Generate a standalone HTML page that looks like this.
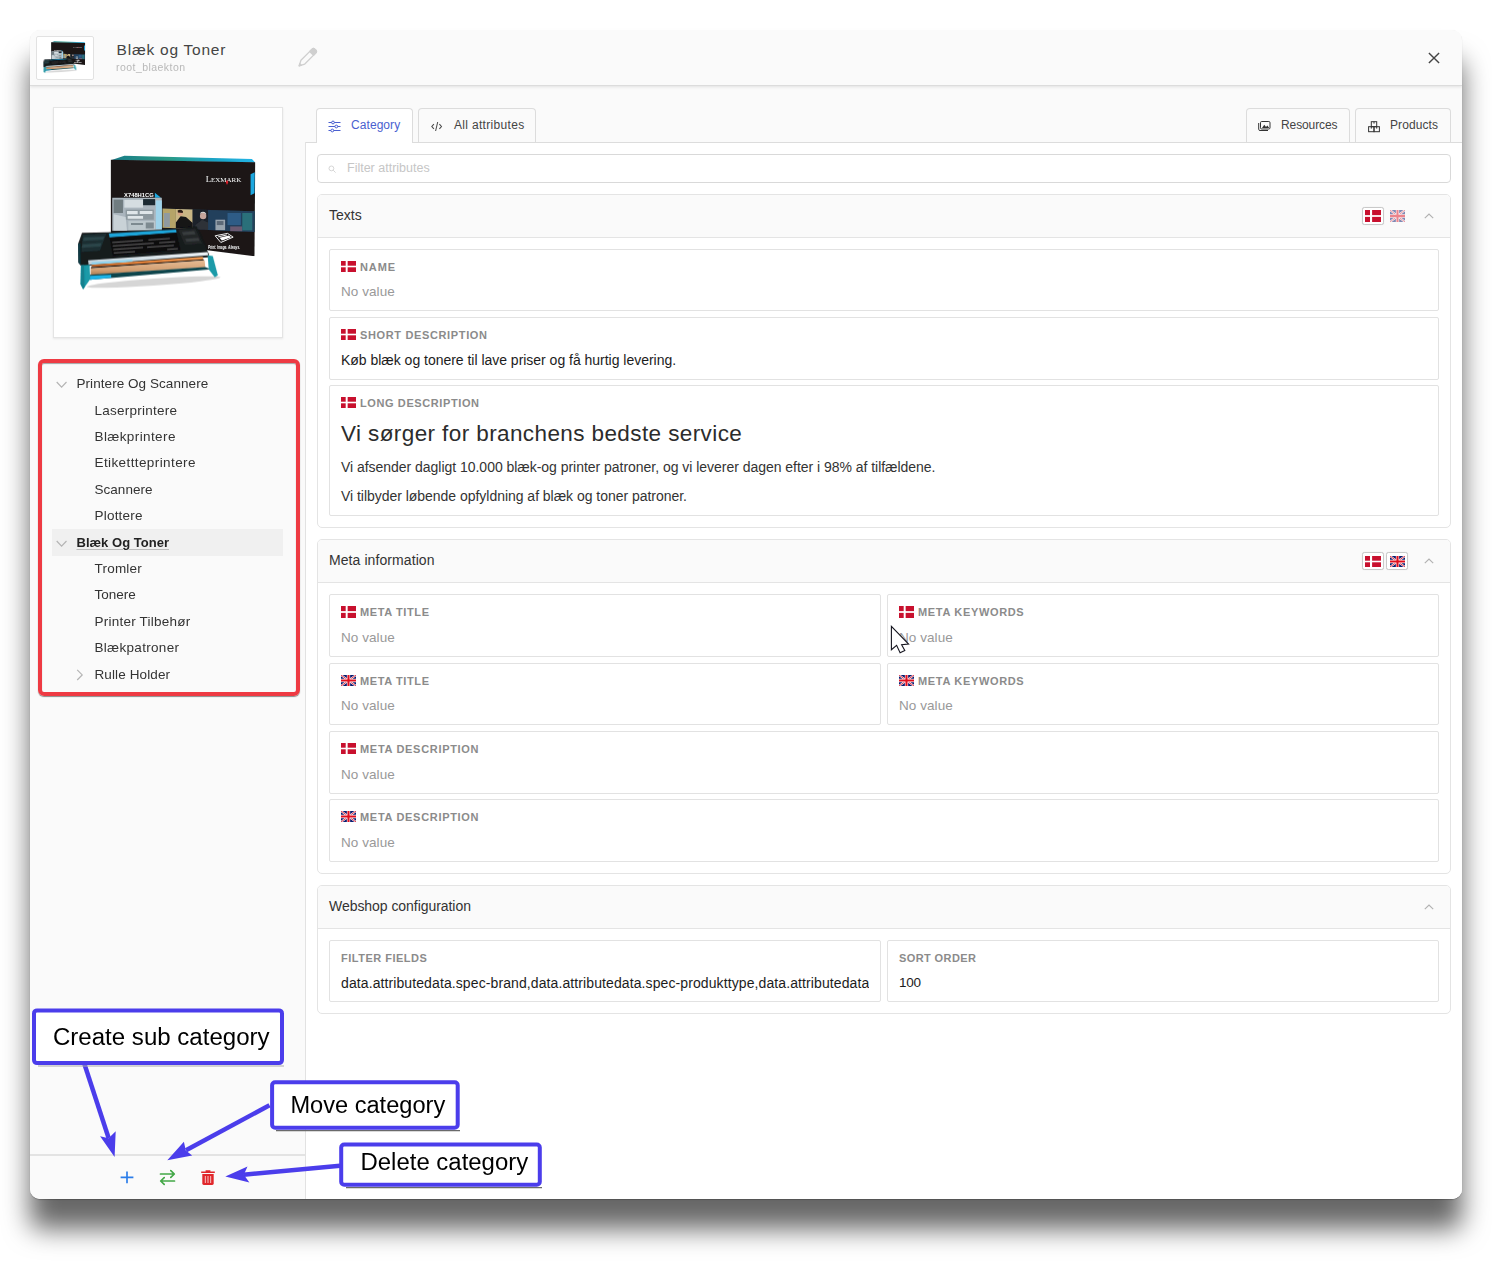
<!DOCTYPE html>
<html lang="en">
<head>
<meta charset="utf-8">
<title>Blæk og Toner</title>
<style>
*{box-sizing:border-box;margin:0;padding:0}
html,body{width:1492px;height:1261px;background:#fff;overflow:hidden}
body{font-family:"Liberation Sans",sans-serif;color:#333;position:relative;font-size:13px}
.abs{position:absolute}
#shadow{position:absolute;left:30px;top:30px;width:1432px;height:1169px;border-radius:10px;background:#fafafa;
  box-shadow:0 30px 27px rgba(0,0,0,.6),0 1px 1px rgba(0,0,0,.22)}
#win{position:absolute;left:0;top:0;width:1492px;height:1261px;clip-path:inset(30px 30px 62px 30px round 10px);background:#fafafa}
#hdr{position:absolute;left:30px;top:30px;width:1432px;height:56px;background:#fafafa;border-bottom:1px solid #dcdcdc;box-shadow:0 1px 3px rgba(0,0,0,.10)}
#thumb{position:absolute;left:36px;top:36px;width:58px;height:44px;background:#fff;border:1px solid #e2e2e2;border-radius:2px;overflow:hidden}
#title{position:absolute;left:116.6px;top:40px;font-size:15.5px;line-height:20px;color:#444;letter-spacing:.76px;white-space:nowrap}
#subtitle{position:absolute;left:116px;top:61px;font-size:10.5px;line-height:12px;color:#b9b9b9;letter-spacing:.45px;white-space:nowrap}
#sideborder{position:absolute;left:305px;top:142px;width:1px;height:1057px;background:#e2e2e2}
#imgcard{position:absolute;left:52.5px;top:107px;width:230.5px;height:231px;background:#fff;border:1px solid #e4e4e4;box-shadow:0 1px 2px rgba(0,0,0,.08)}
#redbox{left:38px;top:359px;width:262px;height:337px;border:4px solid #ee3a43;border-radius:6px;box-shadow:0 1px 1px rgba(0,0,0,.45), inset 0 1px 1px rgba(0,0,0,.35)}
.tree{position:absolute;left:52px;width:231px;height:27px;line-height:28px;font-size:13.5px;color:#333;white-space:nowrap}
.tree span{position:absolute;top:0}
.tree.sel{background:#f0f0f0}
.tree.sel span{font-weight:bold;font-size:13px;color:#222;text-decoration:underline;text-decoration-color:#bbb;text-underline-offset:2px}
#sidefoot{position:absolute;left:30px;top:1154px;width:275px;height:2px;background:#e3e3e3}
#mainbg{position:absolute;left:306px;top:143px;width:1156px;height:1056px;background:#fff}
#tabline{position:absolute;left:305px;top:142px;width:1157px;height:1px;background:#dcdcdc}
.tab{position:absolute;top:108px;height:34px;border:1px solid #dcdcdc;border-bottom:none;border-radius:4px 4px 0 0;background:#fafafa;font-size:12px;line-height:33px;color:#444;white-space:nowrap}
.tab.act{background:#fff;color:#4a5fd0;height:35px}
.tab span{position:absolute;top:0}
.tab svg{position:absolute}
#filter{position:absolute;left:317px;top:154px;width:1134px;height:29px;border:1px solid #d9d9d9;border-radius:4px;background:#fff}
#filter span{position:absolute;left:29px;top:0;line-height:27px;font-size:12.5px;color:#c6c6c6}
.panel{position:absolute;left:317px;width:1134px;border:1px solid #e4e4e4;border-radius:5px;background:#fff}
.phead{position:absolute;left:0;top:0;width:100%;height:43px;background:#fafafa;border-bottom:1px solid #e4e4e4;border-radius:4px 4px 0 0}
.phead b{position:absolute;left:11px;top:0;line-height:41px;font-size:14px;font-weight:normal;color:#333;white-space:nowrap}
.fbtn{width:22px;height:18px;border:1px solid #c9c9c9;border-radius:2.5px;background:#fff;box-shadow:0 0 1px rgba(0,0,0,.15)}
.fld{position:absolute;border:1px solid #e2e2e2;border-radius:2px;background:#fff}
.lbl{position:absolute;left:11px;top:11px;font-size:11px;line-height:13px;font-weight:bold;color:#8b8b8b;letter-spacing:.6px;white-space:nowrap}
.lbl.fl{left:30px}
.flag{position:absolute;left:11px;top:11px;width:15px;height:11px}
.val{position:absolute;left:11px;top:34px;font-size:14px;line-height:16px;color:#1c1c1c;white-space:nowrap;letter-spacing:-.02px}
.val.nv{color:#999;font-size:13.5px;letter-spacing:.07px}
.chev{position:absolute}
.para{font-size:14px;line-height:16px;color:#333;white-space:nowrap;letter-spacing:-.03px}
#h1{left:11px;top:33.5px;font-size:22.5px;line-height:28px;color:#2c2c2c;white-space:nowrap;letter-spacing:.4px}
</style>
</head>
<body>
<svg width="0" height="0" style="position:absolute">
<defs>
<symbol id="dk" viewBox="0 0 16 11" preserveAspectRatio="none"><rect width="16" height="11" fill="#c8102e"/><rect x="5" width="2.1" height="11" fill="#fff"/><rect y="4.7" width="16" height="1.6" fill="#fff"/></symbol>
<symbol id="uk" viewBox="0 0 15 11" preserveAspectRatio="none"><rect width="15" height="11" fill="#0a1a6e"/><path d="M0 0L15 11M15 0L0 11" stroke="#fff" stroke-width="1.9"/><path d="M0 0L15 11M15 0L0 11" stroke="#e0192b" stroke-width="0.9"/><path d="M7.5 0V11M0 5.5H15" stroke="#fff" stroke-width="3.3"/><path d="M7.5 0V11M0 5.5H15" stroke="#e0101f" stroke-width="2.1"/></symbol>
<symbol id="chevup" viewBox="0 0 10 6"><path d="M0.8 5.2L5 1L9.2 5.2" fill="none" stroke="#b2b2b2" stroke-width="1.15"/></symbol>
<linearGradient id="gtop" x1="0" x2="1" y1="0" y2="0"><stop offset="0" stop-color="#1a7d88"/><stop offset=".4" stop-color="#2a9a86"/><stop offset=".7" stop-color="#1ba3c4"/><stop offset="1" stop-color="#25b5e8"/></linearGradient>
<linearGradient id="gsil" x1="0" x2="0" y1="0" y2="1"><stop offset="0" stop-color="#f4f8fa"/><stop offset="1" stop-color="#b9cbd6"/></linearGradient>
<linearGradient id="gcop" x1="0" x2="0" y1="0" y2="1"><stop offset="0" stop-color="#f6a25a"/><stop offset=".6" stop-color="#e67f35"/><stop offset="1" stop-color="#a4501c"/></linearGradient>
<linearGradient id="gtan" x1="0" x2="0" y1="0" y2="1"><stop offset="0" stop-color="#e8bc94"/><stop offset=".7" stop-color="#d19e72"/><stop offset="1" stop-color="#a87a52"/></linearGradient>
<filter id="blr" x="-5%" y="-5%" width="110%" height="110%"><feGaussianBlur stdDeviation="4"/></filter>
<symbol id="prod" viewBox="0 0 1492 1119">
<g filter="url(#blr)">
<path d="M320 76L420 42L1372 68L1397 94Z" fill="url(#gtop)"/>
<path d="M320 72L1397 92L1391 792L320 656Z" fill="#1a1617"/>
<path d="M1362 180L1393 166L1391 322L1362 337Z" fill="#1ea7df"/>
<path d="M1375 460L1392 455L1390 610L1375 606Z" fill="#2e7f78"/>
<!-- lexmark -->
<g font-family="Liberation Serif, serif" fill="#fff"><text x="1028" y="240" font-size="66">L</text><text x="1066" y="240" font-size="50" textLength="226" lengthAdjust="spacingAndGlyphs">EXMARK</text></g>
<path d="M1186 222L1196 240L1186 262L1177 240Z" fill="#e0202a"/>
<!-- model -->
<text x="418" y="352" font-family="Liberation Sans, sans-serif" font-weight="bold" font-size="42" fill="#fff" textLength="222" lengthAdjust="spacingAndGlyphs">X748H1CG</text>
<path d="M648 318L694 356L648 356Z" fill="#1fa9e0"/>
<!-- office photo -->
<path d="M330 356L700 356L700 602L330 602Z" fill="#aab5bd"/>
<path d="M655 376H700V592H655Z" fill="#9fd3ea"/>
<path d="M340 370H410V470H340Z" fill="#6f7b80"/><path d="M420 372H560V430H420Z" fill="#d5dde1"/><path d="M560 366H650V412H560Z" fill="#1f2c33"/>
<path d="M430 445H640V520H430Z" fill="#8d999f"/><path d="M440 455H520V480H440ZM535 455H630V478H535ZM445 492H560V512H445Z" fill="#dfe6e9"/>
<path d="M340 480L430 500L440 600H340Z" fill="#c9d2d7"/><path d="M450 530H650V596H450Z" fill="#bcc7cc"/><path d="M470 545H560V560H470ZM580 540H640V585H580Z" fill="#7d8a90"/>
<!-- photo strip -->
<path d="M705 437L1392 457L1390 612L705 580Z" fill="#20303f"/>
<path d="M705 437L805 440V584L705 580Z" fill="#b5a468"/><path d="M715 470H760V575H715Z" fill="#8f9aa0"/>
<path d="M805 440L930 444V590L805 584Z" fill="#c9b684"/>
<circle cx="838" cy="470" r="20" fill="#d4a283"/><path d="M818 452Q838 436 858 456L856 470L820 466Z" fill="#2a1d16"/>
<path d="M805 540L840 495L880 500L930 545V590L805 584Z" fill="#121214"/>
<path d="M930 444L1045 447V596L930 590Z" fill="#1c2029"/><circle cx="1008" cy="492" r="24" fill="#c6a59b"/><path d="M985 478Q1008 458 1032 480L1028 470Q1008 452 988 468Z" fill="#e8e4e0"/><path d="M950 560L1000 520L1045 540V596L950 592Z" fill="#2d3138"/>
<path d="M1045 447L1392 457L1390 612L1045 596Z" fill="#24405c"/>
<path d="M1100 520H1172V598H1100Z" fill="#98a4ae"/><path d="M1110 530H1160V560H1110Z" fill="#5d6b78"/><path d="M1190 470H1290V560H1190Z" fill="#2e5b86"/><path d="M1210 570H1300V606H1210Z" fill="#6a5a72"/><path d="M1300 470H1375V600H1300Z" fill="#2a6f7a"/>
<!-- icon + tagline -->
<g fill="none" stroke="#fff" stroke-width="7"><path d="M1098 640L1190 622L1232 650L1140 690Z"/><path d="M1120 648L1185 634M1150 668L1210 648"/></g>
<path d="M1130 655L1200 638L1215 650L1148 676Z" fill="#fff"/>
<text x="1044" y="736" font-family="Liberation Sans, sans-serif" font-weight="bold" font-style="italic" font-size="34" fill="#fff" textLength="240" lengthAdjust="spacingAndGlyphs">Print. Image. Always.</text>
<!-- cartridge -->
<ellipse cx="640" cy="985" rx="500" ry="26" fill="#000" opacity=".16" transform="rotate(-4 640 985)"/>
<path d="M75 702L105 618L300 614L806 590L960 571L1012 690L1052 778L1046 800L176 862L100 868L78 840Z" fill="#161b1c"/>
<path d="M110 630L288 623L238 752L100 762Z" fill="#1c2f33"/><path d="M118 652L272 645L262 670L112 678ZM108 704L250 695L242 720L102 730Z" fill="#2c4448"/>
<path d="M75 702L92 694L94 860L78 840Z" fill="#0b3a44"/>
<path d="M822 596L950 586L1002 700L872 708Z" fill="#232628"/><path d="M850 612L942 605L952 628L860 636ZM874 662L972 654L982 677L884 685Z" fill="#383c3e"/>
<path d="M304 624L806 593L810 616L311 653Z" fill="#1fa5da"/>
<path d="M311 653L810 616L840 747L334 792Z" fill="#0f0e10"/>
<g stroke="#7a7a7a" stroke-width="6"><path d="M330 690L560 674M600 671L760 660"/><path d="M334 716L640 695M680 692L800 684"/><path d="M338 742L560 727M590 725L790 712"/><path d="M342 768L500 758M740 742L820 736"/></g>
<path d="M150 822L1042 762L1046 786L154 856Z" fill="url(#gsil)"/>
<path d="M176 838L480 818L482 836L176 856Z" fill="#8fd3ee"/>
<path d="M176 856L1005 797L1009 819L176 874Z" fill="url(#gcop)"/>
<path d="M171 873L1012 816L1014 824L171 884Z" fill="#1b1410"/>
<path d="M169 882L1020 823L1024 875L169 932Z" fill="url(#gtan)"/>
<path d="M161 931L1024 874L1066 890L165 968Z" fill="#0e444c"/>
<path d="M165 938L322 931L322 953L165 968Z" fill="#1fb4e8"/>
<path d="M97 860L161 856L165 965L113 1040L94 1002Z" fill="#1a9aa8"/><path d="M97 860L120 858L124 1024L113 1040L94 1002Z" fill="#12808e"/>
<path d="M1042 785L1080 792L1118 934L1095 950L1050 890Z" fill="#1a9aa8"/>
</g>
</symbol>

</defs></svg>

<div id="shadow"></div>
<div id="win">
  <div id="mainbg"></div>
  <div id="tabline"></div>
  <div id="sideborder"></div>
  <div id="hdr"></div>
  <div id="thumb"><svg class="abs" style="left:4px;top:3px" width="47.2" height="35.4" viewBox="0 0 1492 1119"><use href="#prod"/></svg></div>
  <div id="title">Blæk og Toner</div>
  <div id="subtitle">root_blaekton</div>
  <div id="imgcard"><svg class="abs" style="left:14.5px;top:42px" width="200" height="150" viewBox="0 0 1492 1119"><use href="#prod"/></svg></div>
  <div id="sidefoot"></div>
  <svg class="abs" style="left:290px;top:40px" width="36" height="36" viewBox="290 40 36 36"><g transform="translate(298.9 66.1) rotate(-45)" fill="none" stroke="#cfcfcf" stroke-width="1.3" stroke-linejoin="round"><path d="M0.3 0L5.6 -2.7L21 -2.7Q23.2 -2.7 23.2 -0.8L23.2 0.8Q23.2 2.7 21 2.7L5.6 2.7Z"/><path d="M18 -2.7L21 -2.7Q23.2 -2.7 23.2 -0.8L23.2 0.8Q23.2 2.7 21 2.7L18 2.7Z" fill="#cfcfcf"/><path d="M0.3 0L2.4 -1.1V1.1Z" fill="#cfcfcf"/></g></svg>
  <svg class="abs" style="left:1427px;top:51px" width="14" height="14" viewBox="0 0 14 14"><path d="M1.9 1.9L12.1 12.1M12.1 1.9L1.9 12.1" stroke="#444" stroke-width="1.4" fill="none"/></svg>
  <svg class="abs" style="left:120px;top:1171px" width="14" height="13" viewBox="0 0 14 13"><path d="M7 0.5V12.3M0.6 6.4H13.4" stroke="#2b7de9" stroke-width="1.7" fill="none"/></svg>
  <svg class="abs" style="left:159px;top:1169px" width="17" height="17" viewBox="0 0 17 17" fill="none" stroke="#43a847" stroke-width="1.7" stroke-linecap="round" stroke-linejoin="round"><path d="M1.5 5H15.2M11.8 1.7L15.3 5L11.8 8.3"/><path d="M15.5 12H1.8M5.2 8.7L1.7 12L5.2 15.3"/></svg>
  <svg class="abs" style="left:200px;top:1169px" width="16" height="17" viewBox="0 0 16 17"><path d="M1.2 2.6H14.8V4H1.2Z M5.6 1.2H10.4V2.8H5.6Z" fill="#e0272b"/><path d="M2.3 5H13.7V14.6Q13.7 16 12.3 16H3.7Q2.3 16 2.3 14.6Z" fill="#e0272b"/><path d="M5.4 7V14M8 7V14M10.6 7V14" stroke="#f3a9aa" stroke-width="1.2"/></svg>

  <div class="abs" id="redbox"></div>
  <div class="tree" style="top:370px"><svg class="chev" style="left:4px;top:11px" width="12" height="8" viewBox="0 0 12 8"><path d="M0.7 1.0 L5.6 6.2 L10.5 1.0" fill="none" stroke="#b4b4b4" stroke-width="1.2"/></svg><span style="left:24.5px;letter-spacing:0.06px">Printere Og Scannere</span></div>
  <div class="tree" style="top:397px"><span style="left:42.5px;letter-spacing:0.25px">Laserprintere</span></div>
  <div class="tree" style="top:423px"><span style="left:42.5px;letter-spacing:0.4px">Blækprintere</span></div>
  <div class="tree" style="top:449px"><span style="left:42.5px;letter-spacing:0.4px">Etikettteprintere</span></div>
  <div class="tree" style="top:476px"><span style="left:42.5px;letter-spacing:0.03px">Scannere</span></div>
  <div class="tree" style="top:502px"><span style="left:42.5px;letter-spacing:0.21px">Plottere</span></div>
  <div class="tree sel" style="top:529px"><svg class="chev" style="left:4px;top:11px" width="12" height="8" viewBox="0 0 12 8"><path d="M0.7 1.0 L5.6 6.2 L10.5 1.0" fill="none" stroke="#b4b4b4" stroke-width="1.2"/></svg><span style="left:24.5px;letter-spacing:0.02px">Blæk Og Toner</span></div>
  <div class="tree" style="top:555px"><span style="left:42.5px;letter-spacing:0.21px">Tromler</span></div>
  <div class="tree" style="top:581px"><span style="left:42.5px;letter-spacing:0px">Tonere</span></div>
  <div class="tree" style="top:608px"><span style="left:42.5px;letter-spacing:0.23px">Printer Tilbehør</span></div>
  <div class="tree" style="top:634px"><span style="left:42.5px;letter-spacing:0.31px">Blækpatroner</span></div>
  <div class="tree" style="top:661px"><svg class="chev" style="left:24px;top:8px" width="8" height="12" viewBox="0 0 8 12"><path d="M1.2 0.8 L6.2 5.9 L1.2 11" fill="none" stroke="#b4b4b4" stroke-width="1.2"/></svg><span style="left:42.5px;letter-spacing:0.11px">Rulle Holder</span></div>
  <div class="tab act" style="left:316px;width:97px">
    <svg style="left:11px;top:11px" width="13" height="13" viewBox="0 0 13 13" fill="none" stroke="#4a5fd0" stroke-width="1"><path d="M0.5 2.5H12.5M0.5 6.5H12.5M0.5 10.5H12.5"/><circle cx="5" cy="2.5" r="1.4" fill="#fff"/><circle cx="8.3" cy="6.5" r="1.4" fill="#fff"/><circle cx="4.3" cy="10.5" r="1.4" fill="#fff"/></svg>
    <span style="left:34px;letter-spacing:.07px">Category</span></div>
  <div class="tab" style="left:418px;width:118px">
    <svg style="left:12px;top:12px" width="12" height="11" viewBox="0 0 12 11" fill="none" stroke="#484848" stroke-width="1.05"><path d="M2.9 3.1L0.8 5.5L2.9 7.9M8.4 3.1L10.5 5.5L8.4 7.9M6.7 1L4.6 10"/></svg>
    <span style="left:35px;letter-spacing:.32px">All attributes</span></div>
  <div class="tab" style="left:1246px;width:104px">
    <svg style="left:11px;top:10px" width="13" height="12" viewBox="0 0 13 12" fill="none" stroke="#333" stroke-width="1"><rect x="2.5" y="2.5" width="9.5" height="7.5" rx="1.2"/><path d="M0.7 4V10.3Q0.7 11.5 2 11.5H10" /><path d="M4 9L6.3 5.8L8 8L9.3 6.6L11.3 9Z" fill="#333" stroke="none"/></svg>
    <span style="left:34px;letter-spacing:-.1px">Resources</span></div>
  <div class="tab" style="left:1355px;width:96px">
    <svg style="left:11.5px;top:12px" width="12" height="12" viewBox="0 0 12 12" fill="none" stroke="#333" stroke-width="1"><rect x="3.3" y="0.7" width="5.4" height="5"/><rect x="0.6" y="5.7" width="5.4" height="5"/><rect x="6" y="5.7" width="5.4" height="5"/><path d="M6 0.7V2.6M3.3 5.7V7.6M8.7 5.7V7.6"/></svg>
    <span style="left:34px;letter-spacing:.08px">Products</span></div>
  <div id="filter"><svg class="abs" style="left:9.5px;top:9.5px" width="9" height="9" viewBox="0 0 9 9" fill="none" stroke="#d6d6d6" stroke-width="1"><circle cx="3.4" cy="3.4" r="2.4"/><path d="M5.2 5.2L7.6 7.6"/></svg><span>Filter attributes</span></div>

  <div class="panel" style="top:194px;height:334px"><div class="phead"><b style="letter-spacing:0">Texts</b><div class="abs fbtn" style="left:1044px;top:12px"><svg class="abs" style="left:2px;top:2px" width="16" height="12"><use href="#dk"/></svg></div><svg class="abs" style="left:1072px;top:15px;opacity:.5" width="15" height="12"><use href="#uk"/></svg><svg class="abs" style="left:1106px;top:18px" width="10" height="6"><use href="#chevup"/></svg></div><div class="fld" style="left:11px;top:54px;width:1110px;height:62px"><svg class="flag" style="height:11px" width="15" height="11"><use href="#dk"/></svg><div class="lbl fl" style="letter-spacing:0.87px">NAME</div><div class="val nv" style="">No value</div></div><div class="fld" style="left:11px;top:122px;width:1110px;height:63px"><svg class="flag" style="height:11px" width="15" height="11"><use href="#dk"/></svg><div class="lbl fl" style="letter-spacing:0.64px">SHORT DESCRIPTION</div><div class="val" style="">Køb blæk og tonere til lave priser og få hurtig levering.</div></div><div class="fld" style="left:11px;top:190px;width:1110px;height:131px"><svg class="flag" style="height:11px" width="15" height="11"><use href="#dk"/></svg><div class="lbl fl" style="letter-spacing:0.6px">LONG DESCRIPTION</div><div class="abs" id="h1">Vi sørger for branchens bedste service</div><div class="abs para" style="left:11px;top:73px" id="p1">Vi afsender dagligt 10.000 blæk-og printer patroner, og vi leverer dagen efter i 98% af tilfældene.</div><div class="abs para" style="left:11px;top:102px" id="p2">Vi tilbyder løbende opfyldning af blæk og toner patroner.</div></div></div>
  <div class="panel" style="top:539px;height:335px"><div class="phead"><b style="letter-spacing:.08px">Meta information</b><div class="abs fbtn" style="left:1044px;top:12px"><svg class="abs" style="left:2px;top:3px" width="16" height="11"><use href="#dk"/></svg></div><div class="abs fbtn" style="left:1068px;top:12px"><svg class="abs" style="left:3px;top:3px" width="15" height="11"><use href="#uk"/></svg></div><svg class="abs" style="left:1106px;top:18px" width="10" height="6"><use href="#chevup"/></svg></div><div class="fld" style="left:11px;top:54px;width:552px;height:63px"><svg class="flag" style="height:12px" width="15" height="12"><use href="#dk"/></svg><div class="lbl fl" style="letter-spacing:0.61px">META TITLE</div><div class="val nv" style="top:35px">No value</div></div><div class="fld" style="left:569px;top:54px;width:552px;height:63px"><svg class="flag" style="height:12px" width="15" height="12"><use href="#dk"/></svg><div class="lbl fl" style="letter-spacing:0.66px">META KEYWORDS</div><div class="val nv" style="top:35px">No value</div></div><div class="fld" style="left:11px;top:123px;width:552px;height:62px"><svg class="flag" style="height:11px" width="15" height="11"><use href="#uk"/></svg><div class="lbl fl" style="letter-spacing:0.61px">META TITLE</div><div class="val nv" style="">No value</div></div><div class="fld" style="left:569px;top:123px;width:552px;height:62px"><svg class="flag" style="height:11px" width="15" height="11"><use href="#uk"/></svg><div class="lbl fl" style="letter-spacing:0.66px">META KEYWORDS</div><div class="val nv" style="">No value</div></div><div class="fld" style="left:11px;top:191px;width:1110px;height:63px"><svg class="flag" style="height:11px" width="15" height="11"><use href="#dk"/></svg><div class="lbl fl" style="letter-spacing:0.69px">META DESCRIPTION</div><div class="val nv" style="top:35px">No value</div></div><div class="fld" style="left:11px;top:259px;width:1110px;height:63px"><svg class="flag" style="height:11px" width="15" height="11"><use href="#uk"/></svg><div class="lbl fl" style="letter-spacing:0.69px">META DESCRIPTION</div><div class="val nv" style="top:35px">No value</div></div></div>
  <div class="panel" style="top:885px;height:129px"><div class="phead"><b style="letter-spacing:-.05px">Webshop configuration</b><svg class="abs" style="left:1106px;top:18px" width="10" height="6"><use href="#chevup"/></svg></div><div class="fld" style="left:11px;top:54px;width:552px;height:62px"><div class="lbl" style="letter-spacing:0.5px">FILTER FIELDS</div><div class="val" style=""><span id="ff" style="display:block;width:528px;overflow:hidden;letter-spacing:.1px">data.attributedata.spec-brand,data.attributedata.spec-produkttype,data.attributedata.spec-farve</span></div></div><div class="fld" style="left:569px;top:54px;width:552px;height:62px"><div class="lbl" style="letter-spacing:0.4px">SORT ORDER</div><div class="val" style="font-size:13.5px;letter-spacing:-.3px;">100</div></div></div>
</div>
<svg id="anno" class="abs" style="left:0;top:0" width="1492" height="1261" viewBox="0 0 1492 1261">
<g fill="none" stroke="#4b3deb" stroke-width="4.5" stroke-linecap="butt">
<path d="M84.4 1064L108.6 1138"/>
<path d="M269.5 1105.3L186 1150.2"/>
<path d="M340 1165.7L243.5 1174.7"/>
</g>
<g fill="#4b3deb">
<path d="M114.6 1157L100.1 1136.3L108.6 1138.2L115.7 1131.3Z"/>
<path d="M167.3 1160.2L183.9 1141.8L185.8 1150.6L192.2 1155.6Z"/>
<path d="M225.3 1176.4L247.5 1166.6L243.8 1174.8L249.4 1182.6Z"/>
</g>
<g stroke="#6a6a6a" stroke-width="1.2">
<path d="M38 1066H284" stroke="#aaa"/><path d="M276 1130.6H460"/><path d="M346 1187.6H542"/>
</g>
<g fill="#fff" stroke="#4b3deb" stroke-width="4">
<rect x="34" y="1010.4" width="248" height="52.7" rx="3"/>
<rect x="272.1" y="1082.3" width="185.6" height="45.4" rx="3"/>
<rect x="341.2" y="1144.5" width="198.6" height="40.2" rx="3"/>
</g>
<g font-family="Liberation Sans, sans-serif" fill="#000">
<text x="53" y="1045.2" font-size="24.05">Create sub category</text>
<text x="290.4" y="1112.7" font-size="23.62">Move category</text>
<text x="360.5" y="1170" font-size="23.95">Delete category</text>
</g>
<path d="M891.4 626.3L891.4 649.7L896.6 645.3L900.1 652.7L904.8 650.5L901.6 644.7L908.6 644.1Z" fill="#fff" stroke="#15151f" stroke-width="1.1" stroke-linejoin="miter"/>
</svg>

</body>
</html>
